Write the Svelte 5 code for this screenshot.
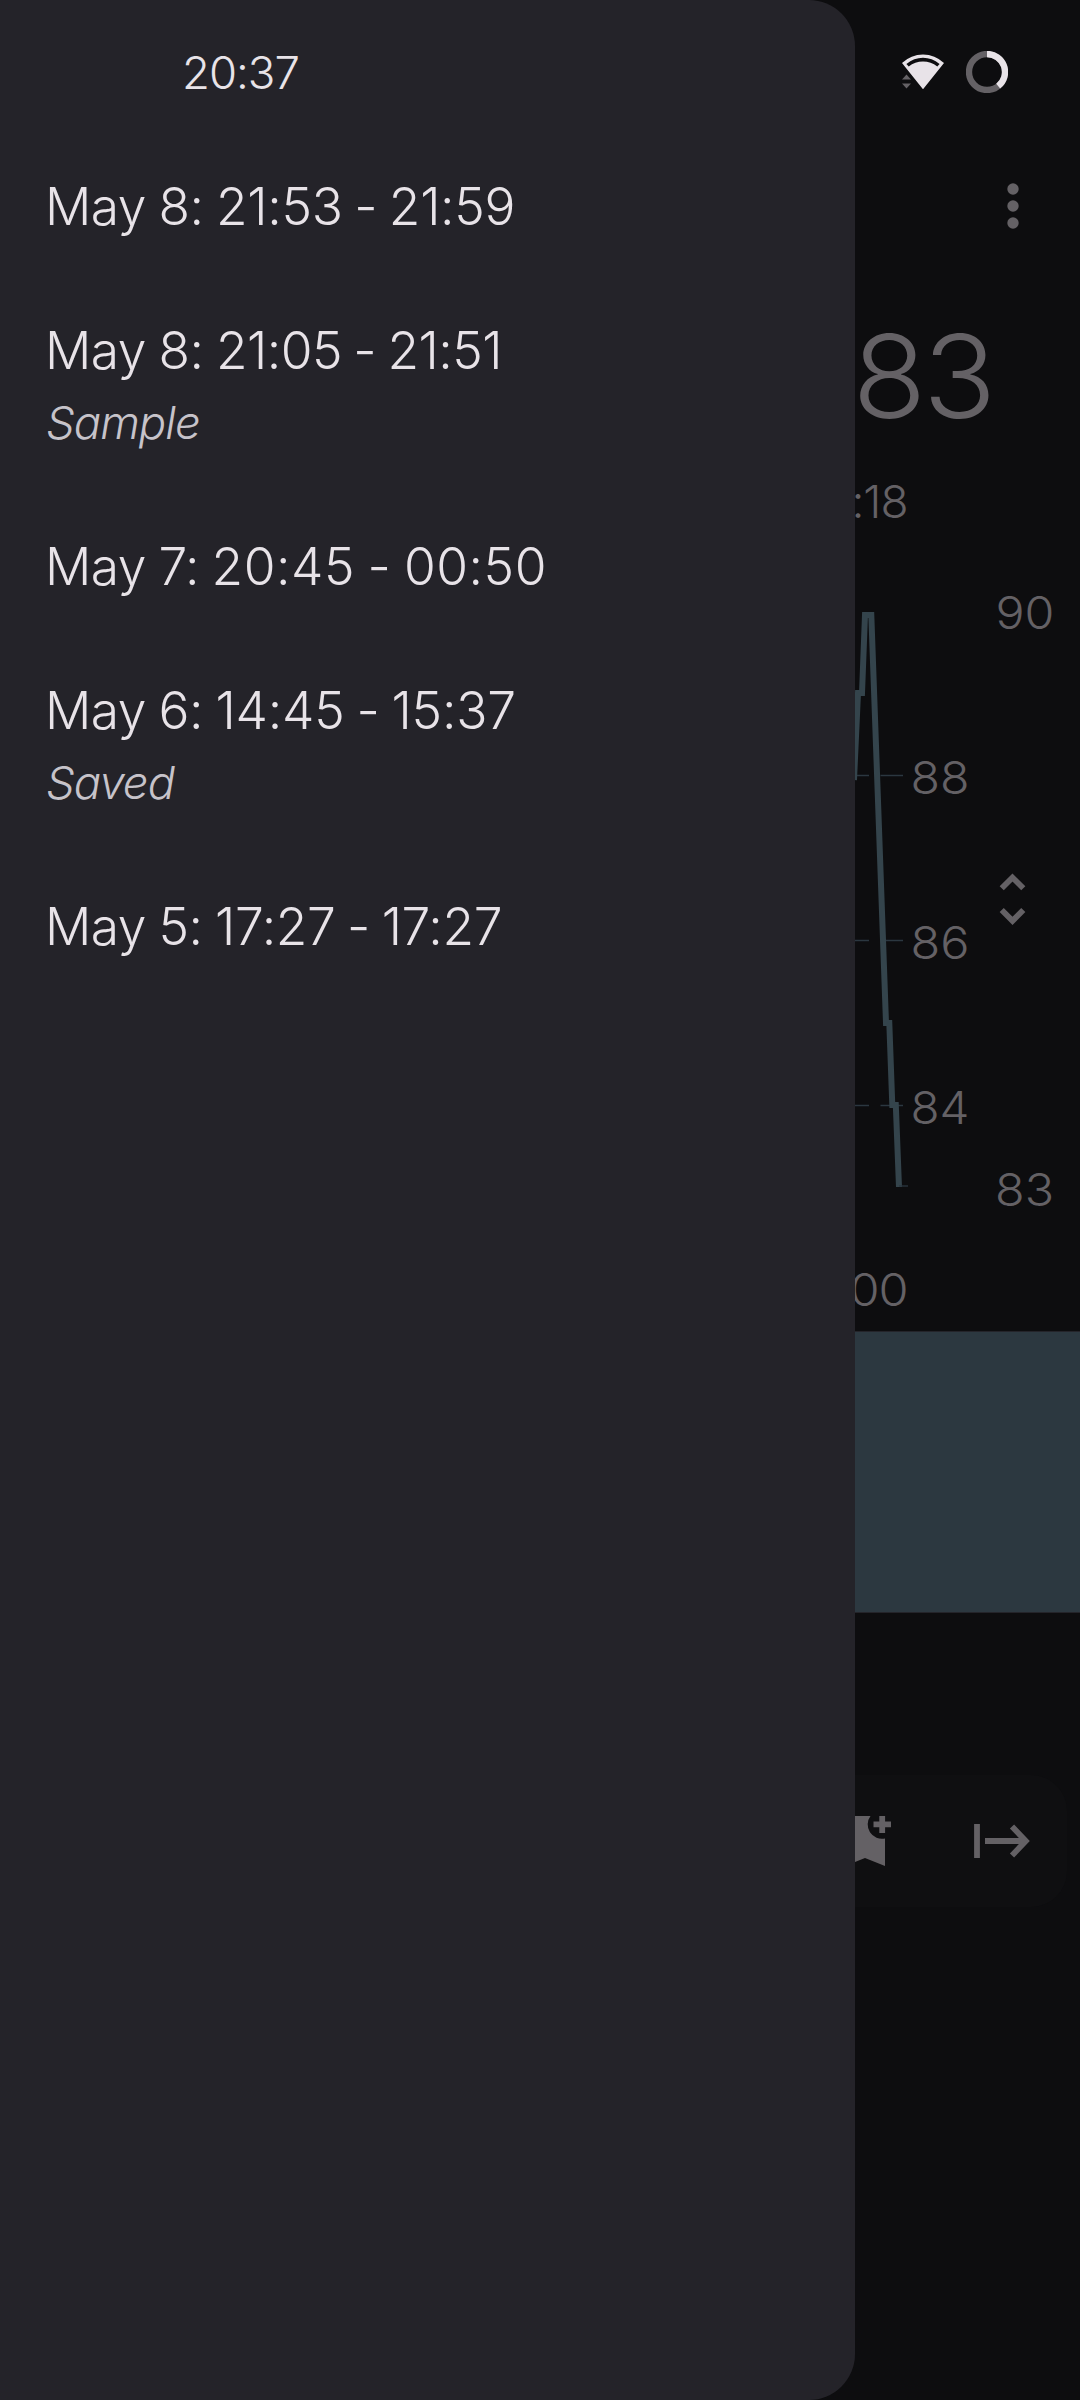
<script>
  const sessions = [
    { day: 'May 8:', span: '21:53 - 21:59', tracking: -0.32 },
    { day: 'May 8:', span: '21:05 - 21:51', tracking: -0.57, note: 'Sample' },
    { day: 'May 7:', span: '20:45 - 00:50', tracking: 0.52 },
    { day: 'May 6:', span: '14:45 - 15:37', tracking: -0.18, note: 'Saved' },
    { day: 'May 5:', span: '17:27 - 17:27', tracking: -0.37 }
  ];
  const ticks = [
    { label: '88', y: 225 },
    { label: '86', y: 390 },
    { label: '84', y: 555 }
  ];
</script>

<div class="screen">
  <main class="monitor">
    <header class="toolbar">
      <svg class="more" width="12" height="48" viewBox="0 0 12 48">
        <circle cx="6" cy="7" r="5.7" /><circle cx="6" cy="24" r="5.7" /><circle cx="6" cy="41" r="5.7" />
      </svg>
    </header>
    <div class="reading">83</div>
    <div class="time start">:18</div>
    <svg class="chart" width="1080" height="700" viewBox="0 0 1080 700">
      {#each ticks as t}
        <path class="grid" d="M840 {t.y + .5}H869M880.5 {t.y + .5}H903" />
        <text x="910.5" y={t.y + 18.7} textLength="59" lengthAdjust="spacingAndGlyphs">{t.label}</text>
      {/each}
      <path class="trace" d="M854 230L858 143H862L865 65H871.3L886 473H889.3L892.3 555H895.8L899 637" />
      <path class="grid" d="M899 636H908" />
      <text x="995.5" y="79.2" textLength="59" lengthAdjust="spacingAndGlyphs">90</text>
      <text x="995" y="655.8" textLength="59" lengthAdjust="spacingAndGlyphs">83</text>
      <path class="unfold" d="M1001.7 338.3L1012.5 327.5L1023.3 338.3M1001.7 360L1012.5 370.8L1023.3 360" />
    </svg>
    <div class="time end">00</div>
    <div class="band"></div>
    <div class="actions">
      <svg width="52" height="56" viewBox="0 0 52 56">
        <path class="fill" d="M6 3H31.5A14.3 14.3 0 0 0 46 25.5V53L26 45L6 53Z" />
        <path class="line" d="M34.5 11.3H52M43.2 3V20" />
      </svg>
      <svg width="58" height="36" viewBox="0 0 58 36">
        <path class="line" d="M5 1V35M13 18H53M40 3.5L53.8 18L40 32.5" />
      </svg>
    </div>
  </main>

  <aside class="drawer">
    <div class="clock">20:37</div>
    <ul>
      {#each sessions as s}
        <li>
          <div class="title"><span class="day">{s.day + ' '}</span><span class="span" style:letter-spacing="{s.tracking}px">{s.span}</span></div>
          {#if s.note}<div class="note">{s.note}</div>{/if}
        </li>
      {/each}
    </ul>
  </aside>

  <div class="status">
    <svg width="42" height="36" viewBox="0 0 42 36">
      <path class="bright" fill-rule="evenodd" d="M0 9Q9 0.4 21 0.4T42 9L21 35.2ZM4.4 10L6.7 12.6Q13 7.6 21 7.6T35.3 12.6L37.6 10Q30 3.7 21 3.7T4.4 10Z" />
      <path class="dim" d="M0 25.5L4.5 20.5L9 25.5ZM0 29.5L4.5 34.5L9 29.5Z" />
    </svg>
    <svg width="42" height="42" viewBox="0 0 42 42">
      <circle class="ring" cx="21" cy="21" r="18" />
      <path class="arc" d="M21 3A18 18 0 0 1 32.2 35.1" />
    </svg>
  </div>
</div>

<style>
  :global(body) { margin: 0; background: #0d0d0f; }
  .screen {
    position: relative;
    width: 1080px;
    height: 2400px;
    overflow: hidden;
    background: #0d0d0f;
    font-family: Inter, "Liberation Sans", sans-serif;
    font-weight: 330;
    font-feature-settings: "calt" 0;
  }
  svg { display: block; }
  .monitor { display: flex; flex-direction: column; color: #646165; fill: #646165; }
  .toolbar { height: 96px; padding: 182px 61.5px 0 0; display: flex; justify-content: flex-end; }
  .reading {
    height: 192px;
    padding-right: 87px;
    margin-top: 20px;
    text-align: right;
    font-size: 115px;
    line-height: 158px;
    letter-spacing: -3px;
    transform: scaleX(1.05);
    transform-origin: 991px 50%;
  }
  .time {
    padding-right: 172.5px;
    text-align: right;
    font-size: 45.5px;
    line-height: 60px;
    letter-spacing: -1px;
    transform-origin: 906px 50%;
  }
  .start { height: 77px; margin-top: -18px; transform: scaleX(1.01); }
  .chart { margin-top: 1px; font-size: 45.5px; }
  .chart path { fill: none; }
  .chart .grid { stroke: #2b3740; stroke-width: 1.3; }
  .chart .trace { stroke: #34444c; stroke-width: 6; }
  .chart .unfold { stroke: #646165; stroke-width: 5.8; }
  .end { height: 71px; padding-top: 10px; transform: scaleX(1.07); }
  .band { height: 280px; background: #2c3840; border: solid #24242a; border-width: 1px 0; }
  .actions {
    display: flex;
    align-items: center;
    justify-content: flex-end;
    gap: 81px;
    height: 132px;
    width: 1016px;
    padding-right: 37px;
    margin: 162px 14px 0;
    border-radius: 36px;
    background: #0f0f11;
  }
  .line { fill: none; stroke: #646165; stroke-width: 5.8; }
  .drawer {
    position: absolute;
    inset: 0 auto 0 0;
    width: 855px;
    border-radius: 0 46px 46px 0;
    background: #242329;
    color: #e8e3e8;
  }
  .clock { padding: 43px 0 0 182px; font-size: 45.5px; line-height: 60px; height: 60px; letter-spacing: -1px; }
  ul { list-style: none; margin: 31px 0 0; padding: 0 45px; }
  li { padding: 36px 0; }
  .title { font-size: 51.5px; line-height: 72px; white-space: pre; }
  .day { letter-spacing: -0.5px; word-spacing: -1.5px; }
  .span { word-spacing: -2.5px; }
  .note { padding: 1px 0 0 1px; font-size: 45.5px; line-height: 71px; font-style: italic; color: #c7c3ca; letter-spacing: -1px; }
  .status { position: absolute; top: 51px; right: 72px; display: flex; align-items: center; gap: 22px; }
  .bright { fill: #e8e3e8; }
  .dim { fill: #646165; }
  .ring, .arc { fill: none; stroke-width: 6.3; stroke: #646165; }
  .arc { stroke: #e8e3e8; }
</style>
